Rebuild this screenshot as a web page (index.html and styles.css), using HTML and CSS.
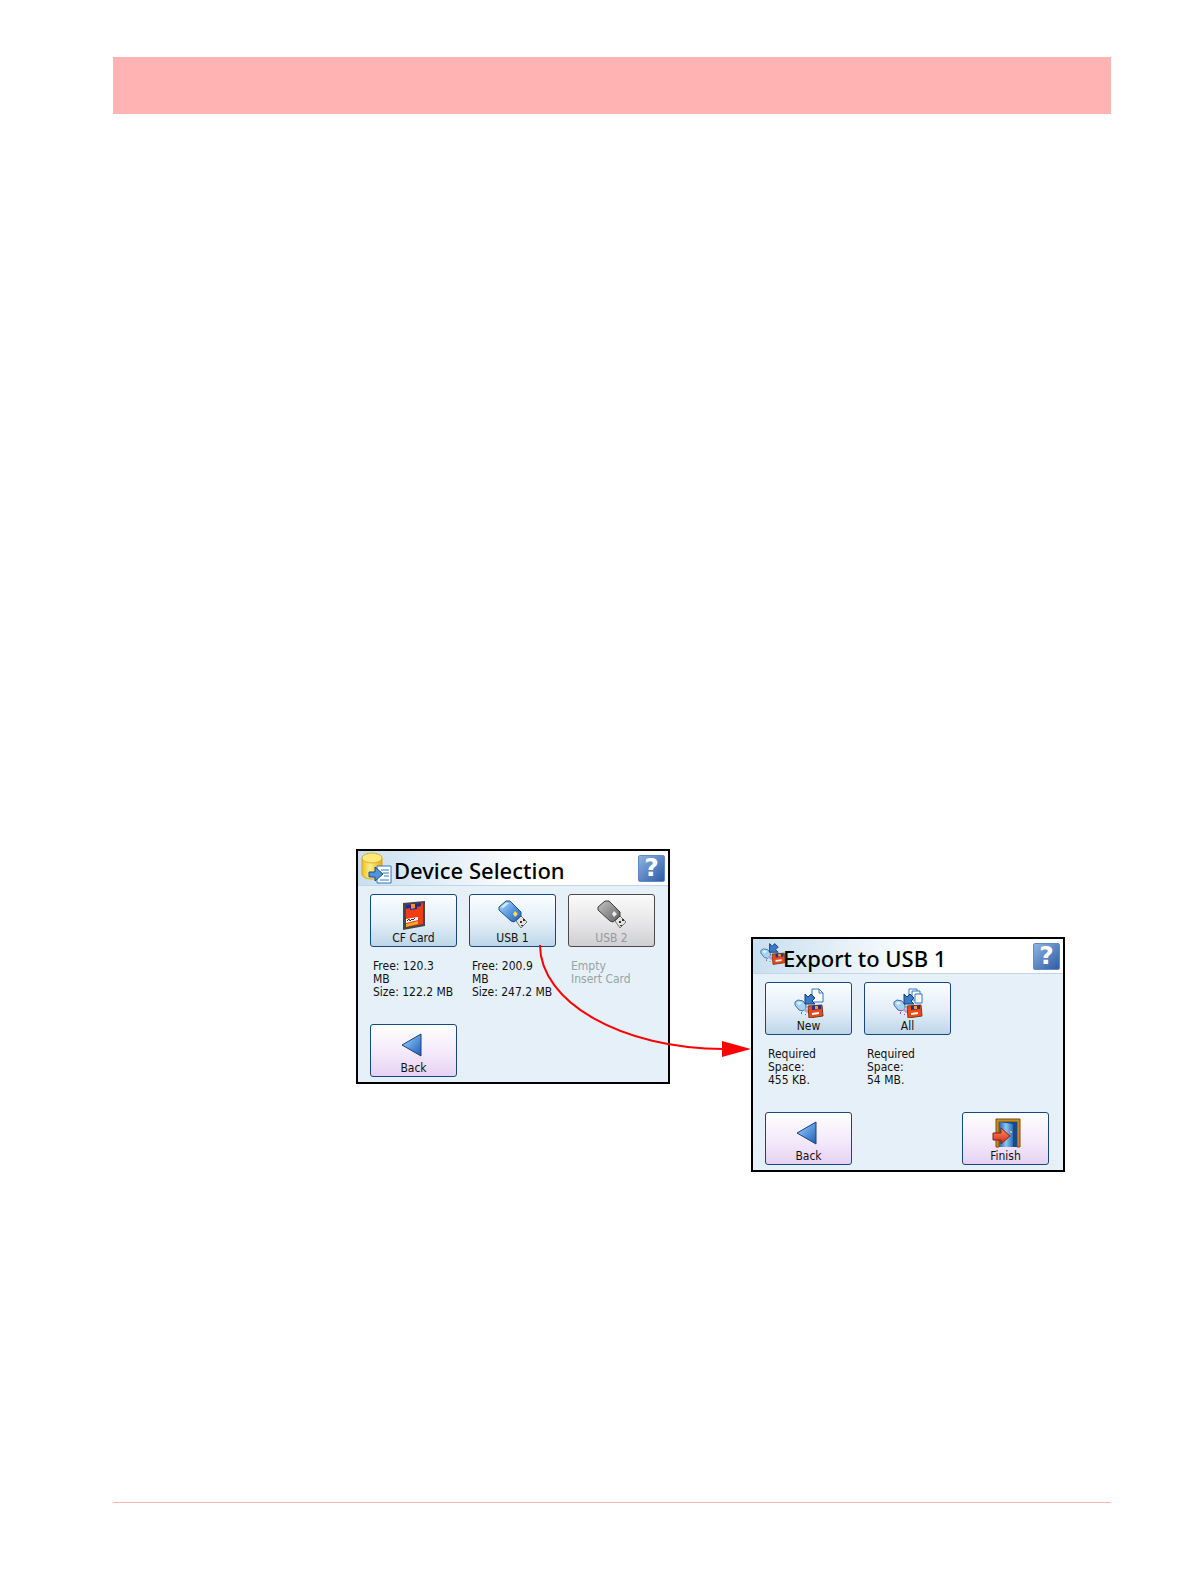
FILE: index.html
```html
<!DOCTYPE html>
<html lang="en">
<head>
    <meta charset="UTF-8">
    <meta name="viewport" content="width=device-width, initial-scale=1.0">
    <title>Device Selection</title>
    <link rel="stylesheet" href="styles.css">
</head>
<body>
    <svg class="defs" width="0" height="0" aria-hidden="true">
      <defs>
        <linearGradient id="blue" x1="0" y1="0" x2="1" y2="1">
          <stop offset="0" stop-color="#b5dcfa"/>
          <stop offset="0.5" stop-color="#5c9be0"/>
          <stop offset="1" stop-color="#1f5cb0"/>
        </linearGradient>
        <linearGradient id="grey" x1="0" y1="0" x2="1" y2="1">
          <stop offset="0" stop-color="#c4c4c4"/>
          <stop offset="1" stop-color="#606060"/>
        </linearGradient>
        <linearGradient id="gold" x1="0" y1="0" x2="1" y2="0">
          <stop offset="0" stop-color="#f2bd1c"/>
          <stop offset="0.4" stop-color="#fff08a"/>
          <stop offset="1" stop-color="#e9a812"/>
        </linearGradient>
        <linearGradient id="red" x1="0" y1="0" x2="0" y2="1">
          <stop offset="0" stop-color="#ff8a60"/>
          <stop offset="1" stop-color="#d42a14"/>
        </linearGradient>
        <linearGradient id="door" x1="0" y1="0" x2="1" y2="0">
          <stop offset="0" stop-color="#1d5fae"/>
          <stop offset="0.5" stop-color="#8cc8f2"/>
          <stop offset="1" stop-color="#2b6fba"/>
        </linearGradient>
        <g id="usb-plug">
          <path d="M18 21 L23 16 L29 22 L23 28 Z" fill="#e4e4e0" stroke="#77777a" stroke-width="1"/>
          <path d="M22 21h2v2h-2z M25 19h2v2h-2z M23 25h2v1h-2z" fill="#333"/>
        </g>
        <g id="transfer">
          <path d="M1 14l3-2 5 1 3 4v3l-3 3-4-1-4-5z" fill="#a9d3f5" stroke="#3f6fa8"/>
          <path d="M3 15l2-1 3 1-3 2z" fill="#e6f5ff"/>
          <path d="M9 22l3-2 3 4-2 1z" fill="#b9a6cf"/>
          <path d="M7 24h1v2h-1z M11 26h1v1h-1z" fill="#c03ad0"/>
          <path d="M14 18l14-1 1 11-14 2z" fill="#ee4816" stroke="#7a3a12"/>
          <path d="M18 18l9-1v4l-9 1z" fill="#27308d"/>
          <path d="M21 18h3v3h-3z" fill="#ff9a20"/>
          <path d="M18 25l7-1v2l-7 1z" fill="#fff"/>
          <path d="M11 6l3 3 3-3 4 4-3 3 3 3H11z" fill="#3b7ac5" stroke="#153f7c"/>
        </g>
      </defs>
    </svg>

    <header class="banner"></header>

    <main class="figure">
      <section class="screen">
        <div class="titlebar">
          <svg class="title-icon" viewBox="0 0 32 32" aria-hidden="true">
            <path d="M1 6v16c0 3 4 5 10 5s10-2 10-5V6z" fill="url(#gold)" stroke="#d8a428"/>
            <ellipse cx="11" cy="6" rx="10" ry="5" fill="#ffe97a" stroke="#dcae35"/>
            <path d="M16 14h14v17H16z" fill="#fff" stroke="#2f78c0"/>
            <path d="M20 18h8M22 21h6M23 24h5M19 28h9" stroke="#2f78c0" stroke-width="1" fill="none"/>
            <path d="M8 20h6v-5l8 7-8 7v-4H8z" fill="#5295da" stroke="#1b4c8d"/>
          </svg>
          <h1>Device Selection</h1>
          <button class="help" type="button" aria-label="Help">?</button>
        </div>
        <div class="content">
          <div class="option">
            <button class="tile" type="button">
              <svg class="icon" viewBox="0 0 30 30" aria-hidden="true">
                <path d="M4 3l22-2v25L4 30z" fill="#4a4444"/>
                <path d="M7 5l17-2v21l-17 3z" fill="#f13c16"/>
                <path d="M7 5l15-2v3l-4 1v2l-7 1V8l-4 1z" fill="#29278f"/>
                <path d="M12 4h4v4l-4 1z" fill="#ff9420"/>
                <path d="M7 19l12-2v3l-12 3z" fill="#fff"/>
                <path d="M8 21l2-2 1 2 2-2 1 1 2-2" fill="none" stroke="#33303c"/>
                <path d="M7 24l12-3v3l-12 3z" fill="#ffa51f"/>
              </svg>
              <span>CF Card</span>
            </button>
            <p>Free: 120.3<br>MB<br>Size: 122.2 MB</p>
          </div>
          <div class="option">
            <button class="tile" type="button">
              <svg class="icon" viewBox="0 0 30 30" aria-hidden="true">
                <use href="#usb-plug"/>
                <path d="M1 7L8 1l4 0L23 12v4l-7 6-3-1L1 10z" fill="url(#blue)" stroke="#204d94"/>
                <path d="M3 7l5-4h3l-6 5z" fill="#d8effd"/>
                <path d="M17 11l3 3-3 3-2-3z" fill="#ffda45"/>
              </svg>
              <span>USB 1</span>
            </button>
            <p>Free: 200.9<br>MB<br>Size: 247.2 MB</p>
          </div>
          <div class="option">
            <button class="tile" type="button" disabled>
              <svg class="icon" viewBox="0 0 30 30" aria-hidden="true">
                <use href="#usb-plug"/>
                <path d="M1 7L8 1l4 0L23 12v4l-7 6-3-1L1 10z" fill="url(#grey)" stroke="#3d3d3d"/>
                <path d="M17 11l3 3-3 3-2-3z" fill="#eee"/>
              </svg>
              <span>USB 2</span>
            </button>
            <p class="empty">Empty<br>Insert Card</p>
          </div>
        </div>
        <div class="actions">
          <button class="tile nav" type="button">
            <svg class="icon" viewBox="0 0 30 30" aria-hidden="true">
              <path d="M3 15L22 4v22z" fill="url(#blue)" stroke="#1c3f80"/>
            </svg>
            <span>Back</span>
          </button>
        </div>
      </section>

      <section class="screen lower">
        <div class="titlebar">
          <svg class="title-icon small" viewBox="0 5 30 26" aria-hidden="true">
            <use href="#transfer"/>
          </svg>
          <h1>Export to USB 1</h1>
          <button class="help" type="button" aria-label="Help">?</button>
        </div>
        <div class="content">
          <div class="option">
            <button class="tile" type="button">
              <svg class="icon" viewBox="0 0 30 30" aria-hidden="true">
                <path d="M18 1h7l4 4v9H18z" fill="#fff" stroke="#2f78c0"/>
                <path d="M25 1v4h4" fill="none" stroke="#2f78c0"/>
                <use href="#transfer"/>
              </svg>
              <span>New</span>
            </button>
            <p>Required<br>Space:<br>455 KB.</p>
          </div>
          <div class="option">
            <button class="tile" type="button">
              <svg class="icon" viewBox="0 0 30 30" aria-hidden="true">
                <path d="M16 1h8v9h-8z" fill="#fff" stroke="#2f78c0"/>
                <path d="M19 3h8v9h-8z" fill="#fff" stroke="#2f78c0"/>
                <path d="M22 6h7v9h-7z" fill="#fff" stroke="#2f78c0"/>
                <use href="#transfer"/>
              </svg>
              <span>All</span>
            </button>
            <p>Required<br>Space:<br>54 MB.</p>
          </div>
        </div>
        <div class="actions">
          <button class="tile nav" type="button">
            <svg class="icon" viewBox="0 0 30 30" aria-hidden="true">
              <path d="M3 15L22 4v22z" fill="url(#blue)" stroke="#1c3f80"/>
            </svg>
            <span>Back</span>
          </button>
          <button class="tile nav" type="button">
            <svg class="icon" viewBox="0 0 30 30" aria-hidden="true">
              <path d="M5 1h24v28h-3V4H8v25H5z" fill="#c88a22" stroke="#79500f" stroke-width="1"/>
              <path d="M8 4h18v25H8z" fill="#174a8e"/>
              <path d="M8 4l14 2v23H8z" fill="url(#door)"/>
              <circle cx="20" cy="14" r="1" fill="#ffcf3a"/>
              <path d="M2 15h8v-5l9 8-9 8v-4H2z" fill="url(#red)" stroke="#8d1d10"/>
            </svg>
            <span>Finish</span>
          </button>
        </div>
      </section>

      <!-- arrow from USB 1 to the export screen -->
      <svg class="arrow" viewBox="0 0 709 323" aria-hidden="true">
        <path d="M184 96C184 153 266 200 368 200" fill="none" stroke="#f00" stroke-width="2"/>
        <path d="M366 192l29 8-29 8z" fill="#f00"/>
      </svg>
    </main>

    <footer class="rule"></footer>
</body>
</html>
```

FILE: styles.css
```css
* {
    box-sizing: border-box;
    margin: 0;
    padding: 0;
}
body {
    display: flex;
    flex-direction: column;
    min-height: 100vh;
    padding: 57px 79px 85px 113px;
    background-color: #fff;
    font-family: "DejaVu Sans Condensed", "DejaVu Sans", sans-serif;
    font-stretch: condensed;
    font-size: 12px;
    line-height: 13px;
    color: #111;
}
.defs {
    position: absolute;
}
.banner {
    height: 57px;
    background-color: #ffb3b3;
}
.figure {
    position: relative;
    display: flex;
    align-items: flex-start;
    align-self: flex-end;
    gap: 81px;
    margin: 735px 46px 0 0;
}
.screen {
    width: 314px;
    border: 2px solid #000;
    background-color: #e6f0f8;
}
.lower {
    margin-top: 88px;
}
.titlebar {
    display: flex;
    align-items: center;
    height: 35px;
    padding: 0 3px;
    border-bottom: 1px solid #c3d5e6;
    background: linear-gradient(to right, #c9dfef, #fff 55%);
}
.title-icon {
    width: 32px;
    height: 32px;
}
.title-icon.small {
    width: 26px;
    height: 24px;
    margin: 0 -4px 4px 4px;
}
h1 {
    flex: 1;
    padding: 3px 0 0 1px;
    font-family: "Noto Sans", "Open Sans", sans-serif;
    font-size: 22px;
    font-weight: 500;
    line-height: 30px;
    color: #000;
}
.help {
    width: 27px;
    height: 27px;
    border: 1px solid #5f8ac2;
    border-radius: 2px;
    background: linear-gradient(135deg, #8fb2df, #2c5ca6);
    color: #fff;
    font-family: "DejaVu Sans", sans-serif;
    font-size: 25px;
    font-weight: bold;
    line-height: 24px;
}
.content {
    display: grid;
    grid-template-columns: repeat(3, 87px);
    gap: 12px;
    height: 138px;
    padding: 8px 12px 0;
}
.option p {
    padding: 13px 0 0 3px;
    white-space: nowrap;
}
.option .empty {
    color: #9ba1a8;
}
.tile {
    display: flex;
    flex-direction: column;
    align-items: center;
    gap: 2px;
    width: 87px;
    height: 53px;
    padding-top: 5px;
    border: 1px solid #164780;
    border-radius: 3px;
    background: linear-gradient(#fafdff, #e2eef8 55%, #bdd6e8);
    color: #111;
    font: inherit;
}
.tile:disabled {
    border-color: #4a4a4a;
    background: linear-gradient(#fafafa, #e6e6e8 55%, #cfcfd2);
    color: #999;
}
.nav {
    background: linear-gradient(#fff, #f4e9fa 55%, #e6d2f2);
}
.icon {
    width: 30px;
    height: 30px;
}
.actions {
    display: flex;
    justify-content: space-between;
    padding: 0 14px 5px 12px;
}
.arrow {
    position: absolute;
    top: 0;
    left: 0;
    width: 709px;
    height: 323px;
    pointer-events: none;
}
.rule {
    margin-top: auto;
    border-top: 1px solid #f5b5b0;
}
```
